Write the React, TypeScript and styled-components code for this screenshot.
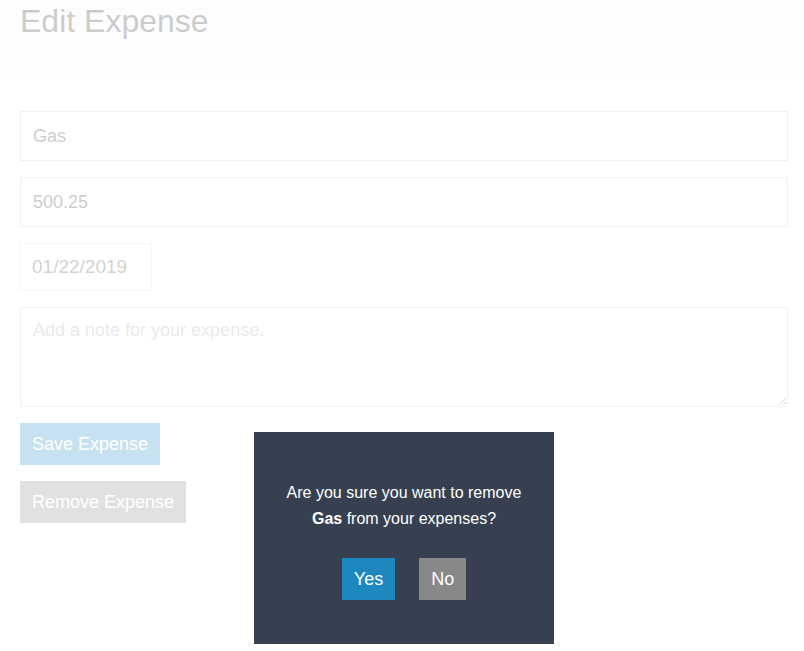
import styled, { createGlobalStyle } from "styled-components";

const GlobalStyle = createGlobalStyle`
  * {
    box-sizing: border-box;
  }
  body {
    margin: 0;
    font-family: "Liberation Sans", Arial, Helvetica, sans-serif;
    color: #333;
    background: #fff;
  }
`;

const Header = styled.div`
  background: #f7f7f7;
  height: 79px;
  padding: 3px 20px 0;
  margin-bottom: 32px;
`;

const Title = styled.h1`
  margin: 0;
  font-size: 32px;
  font-weight: 300;
  line-height: 1.15;
  color: #333;
`;

const Form = styled.form`
  display: flex;
  flex-direction: column;
  align-items: flex-start;
  gap: 16px;
  margin-left: 20px;
  width: 768px;
`;

const TextInput = styled.input`
  width: 100%;
  height: 50px;
  border: 1px solid #cacccd;
  padding: 12px;
  font-family: inherit;
  font-size: 18px;
  font-weight: 300;
  color: #333;
  outline: none;
`;

const DateBox = styled.div`
  width: 132px;
  height: 48px;
  border: 1px solid #dbdbdb;
  padding: 11px 11px 9px;
  font-size: 19px;
  font-weight: 200;
  line-height: 24px;
  color: #484848;
`;

const TextArea = styled.textarea`
  width: 100%;
  height: 100px;
  border: 1px solid #cacccd;
  padding: 12px;
  font-family: inherit;
  font-size: 18px;
  font-weight: 300;
  color: #333;
  resize: both;
  outline: none;
  &::placeholder {
    color: #a9a9a9;
  }
`;

const Button = styled.button<{ $tone?: "blue" | "grey" }>`
  background: ${(p) => (p.$tone === "grey" ? "#888888" : "#1c88bf")};
  border: none;
  color: #fff;
  font-family: inherit;
  font-size: 18px;
  font-weight: 300;
  line-height: 1;
  padding: 12px;
  cursor: pointer;
`;

const Overlay = styled.div`
  position: fixed;
  inset: 0;
  background: rgba(255, 255, 255, 0.75);
`;

const Modal = styled.div`
  position: absolute;
  top: 432px;
  left: 254px;
  width: 300px;
  background: #364051;
  color: #fff;
  padding: 32px 32px 44px;
  text-align: center;
`;

const Message = styled.p`
  margin: 16px 0 0;
  font-size: 16px;
  line-height: 25.6px;
`;

const Actions = styled.div`
  display: flex;
  justify-content: center;
  gap: 24px;
  margin-top: 27px;
`;

export default function App() {
  return (
    <>
      <GlobalStyle />
      <Header>
        <Title>Edit Expense</Title>
      </Header>
      <Form onSubmit={(e) => e.preventDefault()}>
        <TextInput type="text" defaultValue="Gas" />
        <TextInput type="text" defaultValue="500.25" />
        <DateBox>01/22/2019</DateBox>
        <TextArea placeholder="Add a note for your expense." />
        <Button>Save Expense</Button>
        <Button $tone="grey" type="button">Remove Expense</Button>
      </Form>
      <Overlay>
        <Modal>
          <Message>
            Are you sure you want to remove <b>Gas</b> from your expenses?
          </Message>
          <Actions>
            <Button>Yes</Button>
            <Button $tone="grey">No</Button>
          </Actions>
        </Modal>
      </Overlay>
    </>
  );
}
